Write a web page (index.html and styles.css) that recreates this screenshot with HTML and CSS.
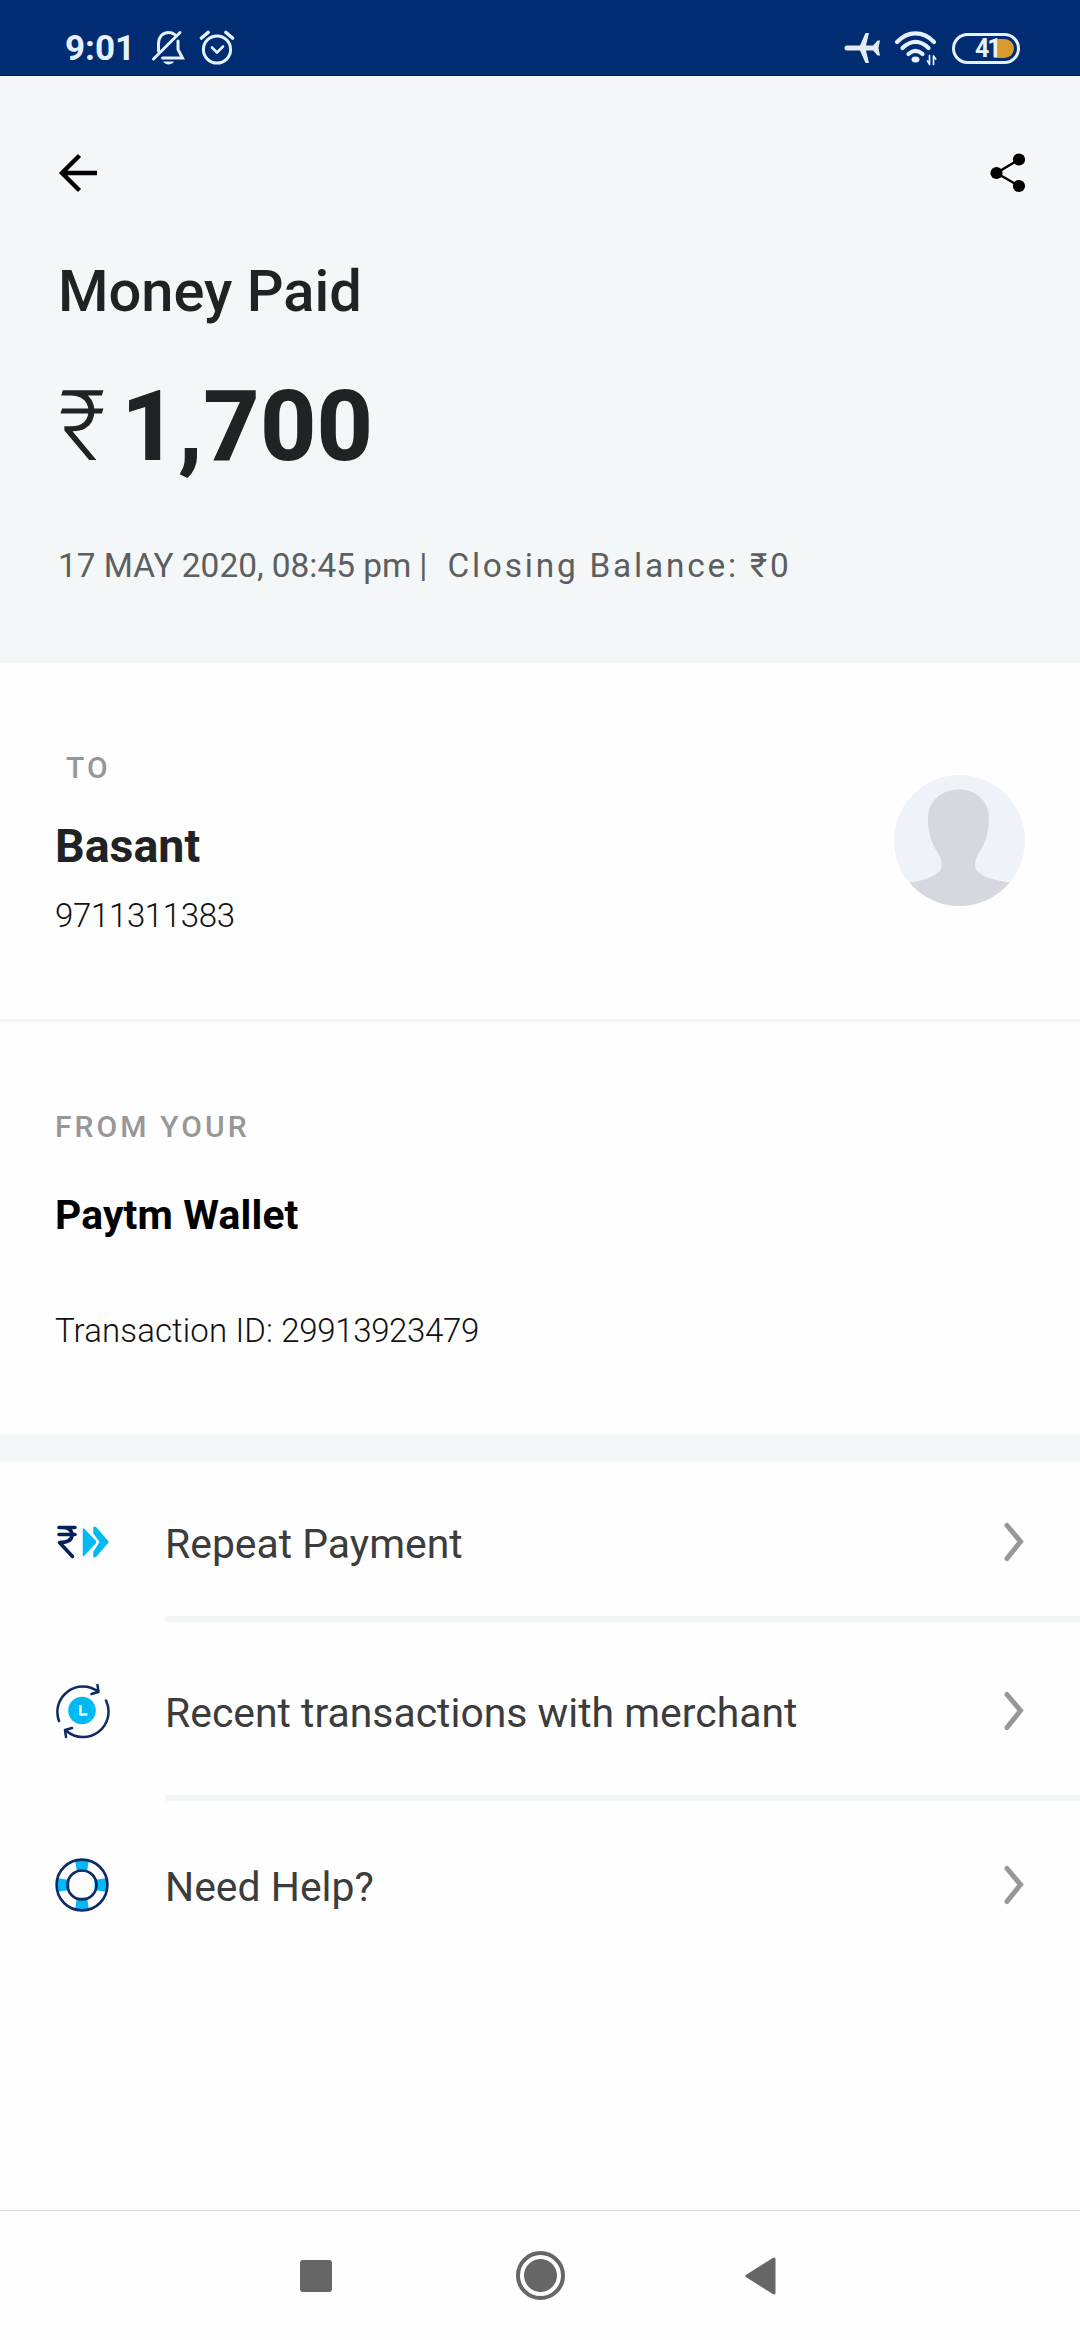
FILE: index.html
```html
<!DOCTYPE html>
<html lang="en">
<head>
<meta charset="utf-8">
<title>Money Paid</title>
<link rel="stylesheet" href="styles.css">
</head>
<body>
<div class="screen">
  <div class="status-bar">
    <span class="clock">9:01</span>
    <svg class="bell" width="34" height="36" viewBox="0 0 34 36" fill="none" stroke="#e6f1ff" stroke-width="3" stroke-linecap="round">
      <path d="M7.5 21V14c0-7 4-11.5 10-11.5 2.500 0 4.500.7 6 1.900M27 11v8.500L31.500 28H11.500M2.500 29 29 2.500"/>
      <path d="M12 31.500h11c-1.500 2.200-3.500 3-5.500 3s-4-1-5.500-3z" fill="#e6f1ff" stroke="none"/>
    </svg>
    <svg class="alarm" width="36" height="36" viewBox="0 0 36 36" fill="none" stroke="#e6f1ff" stroke-linecap="round" stroke-linejoin="round">
      <circle cx="18" cy="19.500" r="13.600" stroke-width="3"/>
      <path d="M13 17.500l5 5 6-6" stroke-width="2.600"/>
      <path d="M2.500 8 9 2.500M27 2.500 33.500 8" stroke-width="3.600"/>
    </svg>
    <span class="spacer"></span>
    <svg class="plane" width="36" height="32" viewBox="0 0 36 32" fill="#e6ecf5">
      <path d="M3 13.500h13L21.500 1H25l-3 12.500h7L33.500 8.500H36L34.500 16 36 23.500h-2.500L29 18.500h-7L25 31h-3.500L16 18.500H3a2.500 2.500 0 0 1 0-5z"/>
    </svg>
    <svg class="wifi" width="44" height="36" viewBox="0 0 44 36" fill="none" stroke="#e6f1ff" stroke-width="4.200" stroke-linecap="round">
      <path d="M3 11C14-.5 29-.5 40 11M8.500 17C17 9 26 9 34.500 17M14.500 23c4.500-4 9.500-4 14 0"/>
      <ellipse cx="21.500" cy="28.500" rx="4" ry="3" fill="#e6f1ff" stroke="none"/>
      <path d="M35.500 24.500v9M33.500 30l2 3M39.500 25v8.500M39.500 25l2.200 3" stroke-width="1.700"/>
    </svg>
    <div class="battery">
      <span class="battery-level"></span>
      <span class="battery-text">41</span>
    </div>
  </div>

  <header class="summary">
    <div class="app-bar">
      <svg width="40" height="40" viewBox="0 0 40 40" fill="none" stroke="#000" stroke-width="4.400">
        <path d="M39 20H4M21.500 2.500 4 20l17.500 17.500"/>
      </svg>
      <svg width="36" height="40" viewBox="0 0 36 40">
        <path d="M29 6.500 6.500 20 29 33" fill="none" stroke="#000" stroke-width="2.400"/>
        <circle cx="6.500" cy="20" r="6.100"/><circle cx="29" cy="6.500" r="6.100"/><circle cx="29" cy="33" r="6.100"/>
      </svg>
    </div>
    <h1 class="title">Money Paid</h1>
    <div class="amount"><span class="currency">₹</span><span>1,700</span></div>
    <div class="meta"><span>17 MAY 2020, 08:45 pm</span><span class="bar">|</span><span class="balance">Closing Balance: ₹0</span></div>
  </header>

  <section class="party">
    <div>
      <div class="label label-to">TO</div>
      <div class="name">Basant</div>
      <div class="detail phone"><span class="digits">9711311383</span></div>
    </div>
    <svg class="avatar" width="131" height="131" viewBox="0 0 131 131">
      <defs><clipPath id="round"><circle cx="65.500" cy="65.500" r="65.500"/></clipPath></defs>
      <g clip-path="url(#round)">
        <path fill="#f0f2f9" d="M0 0h131v131H0z"/>
        <path fill="#d6d8e0" d="M65 14.500c18 0 30 12 30 29 0 16-5 27-11 36-3 5-3.500 9-2.500 14 4 8 19 12 34 14V131H14v-23c15-2 29-7 33-14 1.500-5 0-10-2.500-15C38 69 34 59 34 43.500c0-17 13-29 31-29z"/>
      </g>
    </svg>
  </section>

  <section class="source">
    <div class="label">FROM YOUR</div>
    <div class="wallet">Paytm Wallet</div>
    <div class="detail txn">Transaction ID: <span class="digits">29913923479</span></div>
  </section>

  <nav class="actions">
    <a class="action repeat">
      <svg width="56" height="56" viewBox="0 0 56 56">
        <path d="M5 13.500h16M5 20.500h16M8 13.500c6 0 10 2 10 7.500 0 5-5 7.500-12.500 7.500l13 14" fill="none" stroke="#06205f" stroke-width="3.600" stroke-linecap="round" stroke-linejoin="round"/>
        <path d="M29.500 15 42 28 29.500 41.500z" fill="#00b9f1" stroke="#00b9f1" stroke-width="1.500" stroke-linejoin="round"/>
        <path d="M37 18l6 8v4l-6 8" fill="none" stroke="#fff" stroke-width="2"/>
        <path d="M40 13.500h1.500L54 28 41.500 42.500H40V38l6.500-10L40 19z" fill="#00b9f1" stroke="#00b9f1" stroke-width="1.500" stroke-linejoin="round"/>
      </svg>
      <span class="text">Repeat Payment</span>
      <svg class="chevron" width="20" height="40" viewBox="0 0 20 40"><path d="M3 3.500 16.500 19.500 3 36.500"/></svg>
    </a>
    <a class="action recent">
      <svg width="56" height="56" viewBox="0 0 56 56" fill="none" stroke="#0b2a66" stroke-width="2.500" stroke-linecap="round" stroke-linejoin="round">
        <path d="M5 38A25.500 25.500 0 0 1 44 8.500M43.500 2l1 7-7 2M52 17.500A25.500 25.500 0 0 1 12.500 48M12 54l-1-7 7-2"/>
        <circle cx="28" cy="27.500" r="13.800" fill="#00b9f5" stroke="none"/>
        <path d="M26.500 22v9.500h7" stroke="#e8faff" stroke-linecap="butt"/>
      </svg>
      <span class="text">Recent transactions with merchant</span>
      <svg class="chevron" width="20" height="40" viewBox="0 0 20 40"><path d="M3 3.500 16.500 19.500 3 36.500"/></svg>
    </a>
    <a class="action help">
      <svg width="56" height="56" viewBox="0 0 56 56" fill="none">
        <path d="M21 2.500h14l-2 12.500H23zM21 53h14l-2-12.500H23zM3 21v14l12.500-2V23zM53 21v14L40.500 33V23z" fill="#00b9f5"/>
        <circle cx="28" cy="28" r="25.400" stroke="#0b2a66" stroke-width="2.600"/>
        <circle cx="28" cy="28" r="14.500" stroke="#0b2a66" stroke-width="2.600"/>
      </svg>
      <span class="text">Need Help?</span>
      <svg class="chevron" width="20" height="40" viewBox="0 0 20 40"><path d="M3 3.500 16.500 19.500 3 36.500"/></svg>
    </a>
  </nav>

  <footer class="system-nav">
    <span class="recents"></span>
    <span class="home"></span>
    <svg class="back" width="32" height="38" viewBox="0 0 32 38"><path d="M30 2 3 19l27 17z" fill="#666" stroke="#666" stroke-width="3" stroke-linejoin="round"/></svg>
  </footer>
</div>
</body>
</html>
```
FILE: styles.css
```css
* { box-sizing: border-box; }
body { margin: 0; font-family: Roboto, sans-serif; background: #fefefe; color: #212223; }
svg { display: block; flex: none; }
.screen { width: 1080px; height: 2340px; display: flex; flex-direction: column; overflow: hidden; }

.status-bar { flex: none; height: 76px; background: #002c72; display: flex; align-items: flex-start; padding: 0 60px 0 65px; border-bottom: 1px solid #001c50; }
.clock { font-size: 35px; line-height: 40px; font-weight: 700; color: #e6f1ff; margin-top: 29px; width: 66px; white-space: nowrap; }
.bell { margin: 30px 0 0 20px; }
.alarm { margin: 30px 0 0 14px; }
.spacer { flex: 1; }
.plane { margin: 32px 14px 0 0; }
.wifi { margin: 31px 14px 0 0; }
.battery { position: relative; width: 68px; height: 31px; margin-top: 33px; border: 3px solid #e6f1ff; border-radius: 16px; }
.battery-level { position: absolute; right: 3px; top: 3px; width: 20px; height: 19px; background: #d99a30; border-radius: 0 10px 10px 0; }
.battery-text { position: absolute; left: 20px; top: 0; font-size: 25px; line-height: 25px; font-weight: 700; color: #e6f1ff; letter-spacing: -2px; }

.summary { flex: none; height: 587px; background: #f3f7f8; padding: 49px 54px 0 58px; }
.app-bar { height: 96px; display: flex; align-items: center; justify-content: space-between; }
.title { margin: 36px 0 0; font-size: 57.8px; line-height: 68px; font-weight: 500; }
.amount { display: flex; margin-top: 44px; font-size: 98px; line-height: 116px; font-weight: 800; letter-spacing: 0.2px; }
.currency { font-weight: 300; width: 63px; }
.meta { display: flex; margin-top: 61px; font-size: 33.4px; line-height: 40px; color: #5c5e60; white-space: nowrap; }
.bar { margin-left: 8px; }
.balance { margin-left: 20px; letter-spacing: 2.8px; }

.party { flex: none; height: 359px; display: flex; justify-content: space-between; padding: 87px 55px 0 55px; border-bottom: 3px solid #f5f5f5; }
.avatar { margin-top: 25px; }
.label { font-size: 30px; line-height: 36px; font-weight: 500; color: #979797; letter-spacing: 3.1px; }
.label-to { padding-left: 11px; }
.name { margin-top: 32px; font-size: 46.5px; line-height: 56px; font-weight: 700; }
.detail { font-size: 33px; line-height: 40px; font-weight: 300; color: #111; letter-spacing: 0.12px; }
.digits { letter-spacing: -0.33px; }
.phone { margin-top: 22px; }

.source { flex: none; height: 440px; padding: 87px 55px 0; border-bottom: 28px solid #f3f7f7; }
.wallet { margin-top: 46px; font-size: 40.8px; line-height: 48px; font-weight: 700; color: #000; letter-spacing: 0.15px; }
.txn { margin-top: 72px; }

.actions { flex: 1; }
.action { display: grid; grid-template-columns: 111px 1fr 20px; align-items: center; grid-template-rows: 80px; align-content: start; padding: 0 56px 0 54px; }
.text { font-size: 40.9px; line-height: 48px; padding-top: 3px; color: #3c3c3c; }
.chevron { fill: none; stroke: #979797; stroke-width: 5; stroke-linecap: round; }
.repeat, .recent { background: linear-gradient(#f3f6f6, #f3f6f6) 165px 100% / 100% 6px no-repeat; }
.repeat { height: 160px; padding-top: 40px; }
.recent { height: 179px; padding-top: 49px; }
.help { padding-top: 44px; }

.system-nav { flex: none; height: 130px; border-top: 1px solid #d9dbda; display: flex; align-items: center; padding-left: 300px; }
.recents { width: 32px; height: 32px; border-radius: 3px; background: #666; }
.home { width: 49px; height: 49px; margin-left: 184px; border: 4px solid #666; border-radius: 50%; background: radial-gradient(circle, #666 16px, transparent 16.8px); }
.back { margin-left: 179px; }
```
